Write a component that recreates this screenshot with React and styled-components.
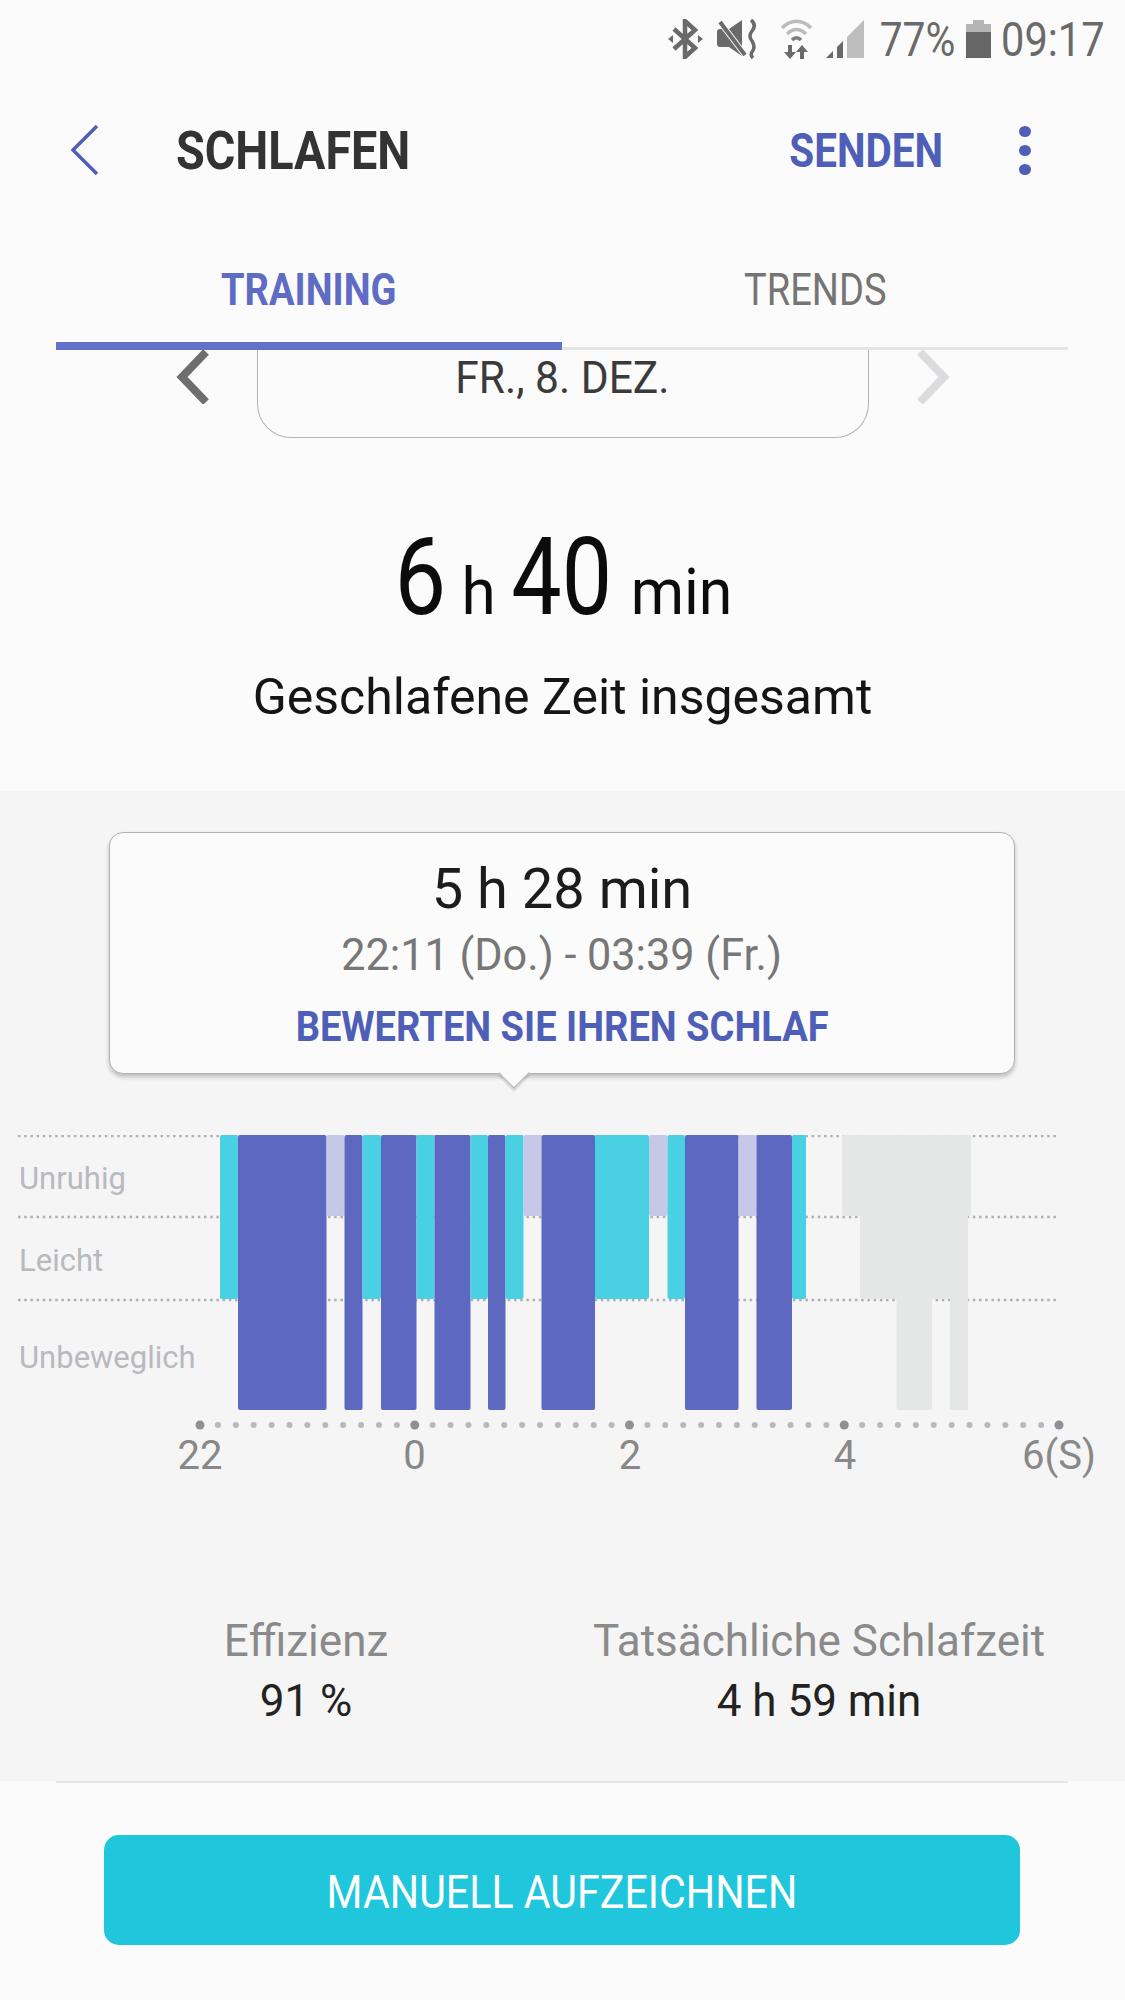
import React from 'react';
import styled, { createGlobalStyle } from 'styled-components';

const INDIGO = '#5d68c0';
const ACCENT = '#4f5fb8';
const TEAL = '#49d0e3';
const LIGHT = '#c6c8e8';
const GHOST = '#e5e6e6';

const GlobalStyle = createGlobalStyle`
  html, body {
    margin: 0;
    padding: 0;
    background: #fbfbfb;
  }
  body {
    font-family: Roboto, "Liberation Sans", sans-serif;
  }
`;

const Page = styled.div`
  width: 1125px;
  height: 2000px;
  display: flex;
  flex-direction: column;
  background: #fbfbfb;
  overflow: hidden;
`;

const Narrow = styled.span`
  display: inline-block;
  white-space: nowrap;
  transform: scaleX(${p => p.$x || 0.84});
  transform-origin: ${p => p.$origin || 'center'};
`;

const StatusBar = styled.div`
  height: 78px;
  box-sizing: border-box;
  padding: 0 20px 0 668px;
  display: flex;
  align-items: center;
  color: #6a6a6a;
  font-size: 48px;
`;

const StatusIcon = styled.svg`
  flex: none;
  display: block;
  margin-right: ${p => p.$mr || 0}px;
`;

const StatusText = styled.div`
  flex: none;
  width: ${p => p.$w}px;
  margin-right: ${p => p.$mr || 0}px;
  display: flex;
  justify-content: center;
`;

const ActionBar = styled.div`
  height: 84px;
  margin-top: 30px;
  display: flex;
  align-items: center;
  padding-left: 70px;
`;

const BackIcon = styled.svg`
  flex: none;
  display: block;
`;

const Title = styled.div`
  width: 300px;
  margin-left: 76px;
  font-size: 54px;
  font-weight: 700;
  color: #333;
`;

const SendButton = styled.div`
  width: 160px;
  margin-left: 310px;
  display: flex;
  justify-content: center;
  font-size: 48px;
  font-weight: 700;
  color: ${ACCENT};
`;

const MenuDots = styled.div`
  margin-left: 73px;
  display: flex;
  flex-direction: column;
  gap: 8px;
  span {
    display: block;
    width: 12px;
    height: 11px;
    border-radius: 50%;
    background: ${ACCENT};
  }
`;

const Tabs = styled.div`
  margin: 46px 57px 0 56px;
  height: 112px;
  display: grid;
  grid-template-columns: 1fr 1fr;
`;

const Tab = styled.div`
  display: flex;
  justify-content: center;
  align-items: center;
  box-sizing: border-box;
  font-size: 45px;
  font-weight: ${p => (p.$active ? 700 : 400)};
  color: ${p => (p.$active ? '#5f6cc4' : '#757575')};
  border-bottom: ${p => (p.$active ? '8px solid #6171cc' : '3px solid #e4e4e6')};
  padding-bottom: ${p => (p.$active ? 2 : 7)}px;
`;

const DateRow = styled.div`
  display: flex;
  justify-content: center;
  align-items: flex-start;
  height: 88px;
`;

const DateArrow = styled.svg`
  flex: none;
  display: block;
`;

const DatePill = styled.div`
  width: 612px;
  height: 88px;
  margin: 0 48px;
  box-sizing: border-box;
  padding-top: 3px;
  border: 1.5px solid #b4b4b4;
  border-top: none;
  border-radius: 0 0 34px 34px;
  display: flex;
  justify-content: center;
  font-size: 45px;
  line-height: 50px;
  color: #3a3a3a;
`;

const Summary = styled.div`
  height: 353px;
  display: flex;
  flex-direction: column;
  align-items: center;
`;

const TotalTime = styled.div`
  margin-top: 74px;
  height: 130px;
  display: flex;
  align-items: baseline;
  justify-content: center;
  color: #0c0c0c;
`;

const BigNumber = styled.span`
  font-size: 108px;
  line-height: 130px;
  margin-left: ${p => p.$ml || 0}px;
`;

const Unit = styled.span`
  font-size: 64px;
  line-height: 130px;
  margin-left: ${p => p.$ml || 0}px;
`;

const TotalLabel = styled.div`
  margin-top: 25px;
  font-size: 50px;
  line-height: 60px;
  color: #151515;
`;

const Panel = styled.div`
  flex: none;
  height: 990px;
  background: #f5f5f5;
  display: flex;
  flex-direction: column;
  align-items: flex-start;
`;

const Bubble = styled.div`
  position: relative;
  width: 906px;
  height: 242px;
  margin: 41px 0 0 109px;
  box-sizing: border-box;
  background: #fbfbfb;
  border: 1.5px solid #b2b2b2;
  border-radius: 14px;
  box-shadow: 0 3px 4px rgba(0, 0, 0, 0.22);
  display: flex;
  flex-direction: column;
  align-items: center;
  &::after {
    content: '';
    position: absolute;
    left: 393px;
    bottom: -11px;
    width: 21px;
    height: 21px;
    background: #fbfbfb;
    border-right: 1.5px solid #b2b2b2;
    border-bottom: 1.5px solid #b2b2b2;
    transform: rotate(45deg);
    box-shadow: 2px 2px 2px rgba(0, 0, 0, 0.14);
  }
`;

const BubbleTime = styled.div`
  margin-top: 23px;
  font-size: 56px;
  line-height: 66px;
  color: #1c1c1c;
`;

const BubbleRange = styled.div`
  margin-top: 7px;
  font-size: 45px;
  line-height: 52px;
  color: #777;
`;

const BubbleLink = styled.div`
  margin-top: 19px;
  font-size: 43px;
  line-height: 52px;
  font-weight: 700;
  color: ${ACCENT};
`;

const Chart = styled.svg`
  display: block;
  margin-top: 61px;
  flex: none;
`;

const Stats = styled.div`
  width: 100%;
  margin-top: 131px;
  display: flex;
`;

const Stat = styled.div`
  width: ${p => p.$w}px;
  margin-left: ${p => p.$ml}px;
  display: flex;
  flex-direction: column;
  align-items: center;
  flex: none;
`;

const StatLabel = styled.div`
  font-size: 44px;
  line-height: 50px;
  color: #8a8a8a;
  white-space: nowrap;
`;

const StatValue = styled.div`
  margin-top: 10px;
  font-size: 44px;
  line-height: 50px;
  color: #222;
  white-space: nowrap;
`;

const Divider = styled.div`
  height: 2px;
  margin: 0 57px 0 56px;
  background: #e6e6e8;
`;

const Footer = styled.div`
  display: flex;
  justify-content: center;
  padding: 52px 2px 0 0;
`;

const RecordButton = styled.div`
  width: 916px;
  height: 110px;
  box-sizing: border-box;
  padding-top: 4px;
  border-radius: 15px;
  background: #20c7dc;
  color: #fff;
  font-size: 46px;
  display: flex;
  align-items: center;
  justify-content: center;
`;

// x from, x to, colour, bar height below the top line
const SEGMENTS = [
  [220, 238, TEAL, 164],
  [238, 326.5, INDIGO, 275],
  [326.5, 344.5, LIGHT, 81],
  [344.5, 362.5, INDIGO, 275],
  [362.5, 381, TEAL, 164],
  [381, 416.5, INDIGO, 275],
  [416.5, 434.5, TEAL, 164],
  [434.5, 470.5, INDIGO, 275],
  [470.5, 488, TEAL, 164],
  [488, 505.5, INDIGO, 275],
  [505.5, 523.5, TEAL, 164],
  [523.5, 541.5, LIGHT, 81],
  [541.5, 595, INDIGO, 275],
  [595, 649, TEAL, 164],
  [649, 667.5, LIGHT, 81],
  [667.5, 685, TEAL, 164],
  [685, 738.5, INDIGO, 275],
  [738.5, 756.5, LIGHT, 81],
  [756.5, 792, INDIGO, 275],
  [792, 806, TEAL, 164],
  [842, 971, GHOST, 81],
  [860, 968, GHOST, 164],
  [896.5, 932, GHOST, 275],
  [950, 968, GHOST, 275],
];

const LEVEL_LABELS = [
  ['Unruhig', 54],
  ['Leicht', 136],
  ['Unbeweglich', 233],
];

const AXIS = [
  ['22', 200],
  ['0', 414.5],
  ['2', 630],
  ['4', 845],
  ['6(S)', 1059],
];

const tickCount = 48;
const ticks = Array.from({ length: tickCount + 1 }, (_, i) => 200 + (i * (1059 - 200)) / tickCount);

const SleepChart = () => (
  <Chart width="1125" height="350" viewBox="0 0 1125 350">
    {[1, 82, 165].map(y => (
      <line key={y} x1="18" x2="1059" y1={y} y2={y} stroke="#b0b0b4" strokeWidth="2.5" strokeDasharray="2.5 3.7" />
    ))}
    {SEGMENTS.map(([x1, x2, fill, h]) => (
      <rect key={`${x1}-${h}`} x={x1} y="0" width={x2 - x1} height={h} rx="2" fill={fill} />
    ))}
    {ticks.map((x, i) => (
      <circle
        key={x}
        cx={x}
        cy="290"
        r={i % 12 === 0 ? 4.5 : 3}
        fill={i % 12 === 0 ? '#909094' : '#b9b9bd'}
      />
    ))}
    {LEVEL_LABELS.map(([text, y]) => (
      <text key={text} x="19" y={y} fontFamily="Roboto" fontSize="31" fill="#b9b9c0">
        {text}
      </text>
    ))}
    {AXIS.map(([text, x]) => (
      <text key={text} x={x} y="334" textAnchor="middle" fontFamily="Roboto" fontSize="40" fill="#888">
        {text}
      </text>
    ))}
  </Chart>
);

const App = () => (
  <Page>
    <GlobalStyle />
    <StatusBar>
      <StatusIcon width="35" height="40" viewBox="0 0 35 40" $mr={14}>
        <path d="M6 10 L27 29 L17 38 V2 L27 11 L6 30" fill="none" stroke="#6a6a6a" strokeWidth="4.5" />
        <path d="M0 20 L5 16 V24 Z M35 20 L30 16 V24 Z" fill="#6a6a6a" />
      </StatusIcon>
      <StatusIcon width="40" height="40" viewBox="0 0 40 40" $mr={23}>
        <path d="M0 13 Q0 10 3 10 H12 L25 1 V37 L12 28 H3 Q0 28 0 25 Z" fill="#6a6a6a" />
        <path d="M3 3 L28 36" stroke="#fbfbfb" strokeWidth="6" />
        <path d="M3 3 L28 36" stroke="#6a6a6a" strokeWidth="4" />
        <path d="M34 1 Q40 6 35 12 Q31 17 35 22 Q39 28 35 33 Q33 36 36 39" fill="none" stroke="#6a6a6a" strokeWidth="3.5" />
      </StatusIcon>
      <StatusIcon width="33" height="40" viewBox="0 0 33 40" $mr={13}>
        <path d="M2 9 C11 0 22 0 31 9" fill="none" stroke="#bcbcbc" strokeWidth="3.5" />
        <path d="M7 15 C13 9 20 9 26 15" fill="none" stroke="#bcbcbc" strokeWidth="3.5" />
        <path d="M12 21 C15 18 18 18 21 21" fill="none" stroke="#7c7c7c" strokeWidth="3.5" />
        <path d="M8 26 H12 V33 H16 L10 40 L4 33 H8 Z" fill="#6a6a6a" />
        <path d="M20 40 H24 V33 H28 L22 26 L16 33 H20 Z" fill="#6a6a6a" />
      </StatusIcon>
      <StatusIcon width="38" height="38" viewBox="0 0 38 38" $mr={17}>
        <path d="M0 38 L7 31 V38 Z" fill="#6a6a6a" />
        <path d="M11 27 L17 21 V38 H11 Z" fill="#6a6a6a" />
        <path d="M21 17 L38 0 V38 H21 Z" fill="#bdbdbd" />
      </StatusIcon>
      <StatusText $w={73} $mr={12}>
        <Narrow $x={0.85}>77%</Narrow>
      </StatusText>
      <StatusIcon width="25" height="40" viewBox="0 0 25 40" $mr={12}>
        <path d="M7 1 H18 V5 H25 V13 H0 V5 H7 Z" fill="#b5b5b5" />
        <path d="M0 13 H25 V39 H0 Z" fill="#666" />
      </StatusIcon>
      <StatusText $w={100}>
        <Narrow $x={0.865}>09:17</Narrow>
      </StatusText>
    </StatusBar>

    <ActionBar>
      <BackIcon width="30" height="52" viewBox="0 0 30 52">
        <path d="M27 2 L3 26 L27 50" fill="none" stroke={ACCENT} strokeWidth="3.5" />
      </BackIcon>
      <Title>
        <Narrow $x={0.865} $origin="left">SCHLAFEN</Narrow>
      </Title>
      <SendButton>
        <Narrow $x={0.843}>SENDEN</Narrow>
      </SendButton>
      <MenuDots>
        <span />
        <span />
        <span />
      </MenuDots>
    </ActionBar>

    <Tabs>
      <Tab $active>
        <Narrow $x={0.846}>TRAINING</Narrow>
      </Tab>
      <Tab>
        <Narrow $x={0.846}>TRENDS</Narrow>
      </Tab>
    </Tabs>

    <DateRow>
      <DateArrow width="34" height="54" viewBox="0 0 34 54">
        <path d="M31 2 L7 27 L31 52" fill="none" stroke="#6e6e6e" strokeWidth="8" />
      </DateArrow>
      <DatePill>
        <Narrow $x={0.945}>FR., 8. DEZ.</Narrow>
      </DatePill>
      <DateArrow width="34" height="54" viewBox="0 0 34 54">
        <path d="M3 2 L27 27 L3 52" fill="none" stroke="#dcdcdf" strokeWidth="8" />
      </DateArrow>
    </DateRow>

    <Summary>
      <TotalTime>
        <BigNumber>
          <Narrow $x={0.85}>6</Narrow>
        </BigNumber>
        <Unit $ml={10}>
          <Narrow $x={0.97}>h</Narrow>
        </Unit>
        <BigNumber $ml={5}>
          <Narrow $x={0.83}>40</Narrow>
        </BigNumber>
        <Unit $ml={6}>
          <Narrow $x={0.95}>min</Narrow>
        </Unit>
      </TotalTime>
      <TotalLabel>Geschlafene Zeit insgesamt</TotalLabel>
    </Summary>

    <Panel>
      <Bubble>
        <BubbleTime>5 h 28 min</BubbleTime>
        <BubbleRange>
          <Narrow $x={0.96}>22:11 (Do.) - 03:39 (Fr.)</Narrow>
        </BubbleRange>
        <BubbleLink>
          <Narrow $x={0.885}>BEWERTEN SIE IHREN SCHLAF</Narrow>
        </BubbleLink>
      </Bubble>
      <SleepChart />
      <Stats>
        <Stat $w={300} $ml={156}>
          <StatLabel>Effizienz</StatLabel>
          <StatValue>91 %</StatValue>
        </Stat>
        <Stat $w={500} $ml={113}>
          <StatLabel>Tatsächliche Schlafzeit</StatLabel>
          <StatValue>4 h 59 min</StatValue>
        </Stat>
      </Stats>
    </Panel>

    <Divider />
    <Footer>
      <RecordButton>
        <Narrow $x={0.895}>MANUELL AUFZEICHNEN</Narrow>
      </RecordButton>
    </Footer>
  </Page>
);

export default App;
